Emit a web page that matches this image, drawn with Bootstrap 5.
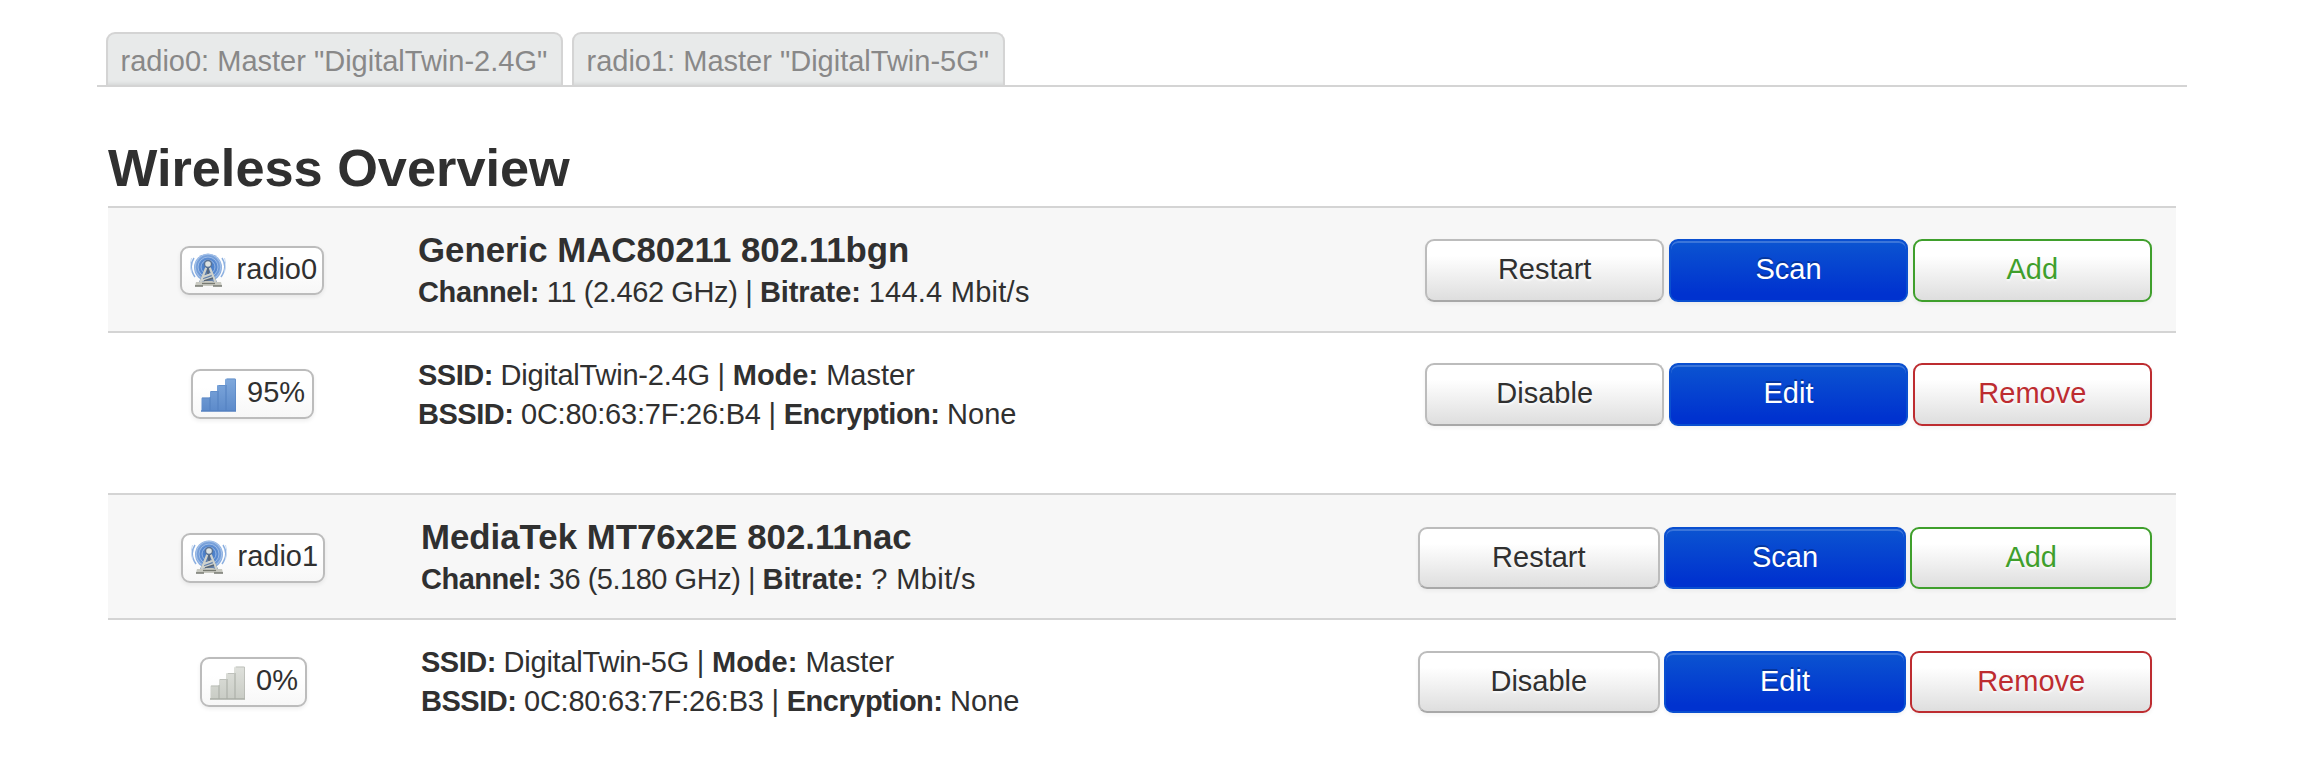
<!DOCTYPE html>
<html lang="en">
<head>
<meta charset="utf-8">
<meta name="viewport" content="width=device-width, initial-scale=1">
<title>Wireless Overview</title>
<link rel="stylesheet" href="https://cdn.jsdelivr.net/npm/bootstrap@5.3.0/dist/css/bootstrap.min.css">
<style>
body{font-family:"Liberation Sans",Arial,sans-serif;font-size:29px;line-height:39.5px;color:#303030;background:#fff;overflow:hidden}
.page{width:2090px;margin-left:97px;padding-top:32px}
.wifi-tabs{border-bottom:2px solid #d4d4d4;padding-left:9px;gap:9px}
.wifi-tabs .nav-link{height:53px;padding:9px 0 0 12.5px;border:2px solid #d4d4d4;border-bottom:0;border-radius:9px 9px 0 0;background:#e8eaea;box-shadow:inset 0 -4px 4px -3px rgba(0,0,0,.1);color:#888;line-height:36px;white-space:nowrap;margin:0}
.tab-a{width:457px}
.tab-b{width:433px}
.overview{margin:0 11px}
h2{font-size:52.3px;line-height:60px;font-weight:700;margin:50.6px 0 8.4px}
.device{border-top:2px solid #d4d4d4}
.device+.device{margin-top:35px}
.line{padding-top:22px;height:125px}
.line.head{background:#f7f7f7;border-bottom:2px solid #d4d4d4}
.state{width:288px;margin-right:1px}
.info{padding-left:21px;white-space:nowrap}
.second .state{width:290px}
.second .info{padding-left:22px}
.net .info{padding-top:1px}
h3{font-size:34.8px;line-height:40px;font-weight:700;margin:0 0 3px}
.chip{border:2px solid #bcbcbc;border-radius:9px;background:linear-gradient(#fff,#fff 35%,#f7f7f7);box-shadow:0 2px 4px rgba(0,0,0,.07);height:49px;padding-left:8px;line-height:43px;margin-top:16px;white-space:nowrap}
.chip svg{display:block;margin-top:5px;margin-right:10.5px;flex:none}
.net .chip{height:50px;margin-top:14px}
.net .chip svg{margin-top:7px}
.second .chip{height:50px}
.second .net .chip{margin-top:15px}
.w-radio{width:144px}
.w-sig{width:123px}
.w-zero{width:107px}
.actions{width:727px;gap:4.5px;margin-right:24px;margin-top:9px}
.net .actions{margin-top:8px}
.second .actions{width:734px;margin-top:10px}
.second .net .actions{margin-top:9px}
.actions .btn{flex:1 1 0;height:63px;padding:0 0 3px;font-size:29px;line-height:57px;border:2px solid #bcbcbc;border-bottom-color:#a8a8a8;border-radius:9px;color:#303030;background:linear-gradient(#fff,#fff 25%,#dedede);box-shadow:0 2px 4px rgba(0,0,0,.05);text-shadow:0 2px 2px rgba(255,255,255,.75)}
.second .actions .btn{height:62px;line-height:56px}
.actions .btn.go{color:#fff;border-color:#0a4fd0;background:linear-gradient(#0b54d1,#0032cf 90%);box-shadow:inset 0 2px 0 rgba(255,255,255,.2),0 2px 4px rgba(0,0,0,.05);text-shadow:0 -2px 0 rgba(0,0,0,.25)}
.actions .btn.plus{color:#3f9f2c;border-color:#3f9f2c}
.actions .btn.minus{color:#bd2c30;border-color:#bd2c30}
.t5{letter-spacing:-.48px}.t4{letter-spacing:-.38px}.t3{letter-spacing:-.22px}.t1{letter-spacing:-.1px}.p3{letter-spacing:.25px}.p5{letter-spacing:.4px}
</style>
</head>
<body>
<svg width="0" height="0" class="position-absolute" aria-hidden="true">
  <defs>
    <radialGradient id="glow"><stop offset="0" stop-color="#3f75c2"/><stop offset=".6" stop-color="#5688cf"/><stop offset="1" stop-color="#8fb2e2"/></radialGradient>
    <linearGradient id="blue" x2="0" y2="1"><stop offset="0" stop-color="#80a9dc"/><stop offset="1" stop-color="#5c8aca"/></linearGradient>
    <linearGradient id="grey" x2="0" y2="1"><stop offset="0" stop-color="#dfe1dc"/><stop offset="1" stop-color="#c9ccc5"/></linearGradient>
    <symbol id="radio" viewBox="0 0 36 36">
      <circle cx="18" cy="14.500" r="14" fill="url(#glow)"/>
      <g fill="none" stroke="#b9d0f0" stroke-width="1" opacity=".65"><circle cx="18" cy="14" r="7"/><circle cx="18" cy="14" r="10"/><circle cx="18" cy="14" r="12.800"/></g>
      <path d="M4 5q-6 9 1 19M32 5q6 9-1 19" fill="none" stroke="#8db0e0" stroke-width="1.500"/>
      <path d="M1.500 5q-3 7 0 14M34.500 5q3 7 0 14" fill="none" stroke="#cbdcf2" stroke-width="1"/>
      <path d="M16 13 9 29h18l-7-16z" fill="#54709a" opacity=".75"/>
      <path d="m16.500 14-6 15M19.500 14l6 15M13 24l8-3M11 28l12-4" stroke="#cfd2cd" stroke-width="2.200"/>
      <path d="m18 15 0 6M14 28l9-3" stroke="#596675" stroke-width="1.600"/>
      <circle cx="18" cy="11" r="3.500" fill="#dde2e1" stroke="#587296" stroke-width="1.400"/>
      <path d="M6 29h7l2-1h7l2 1h7l1 4H5z" fill="#c8c9c1"/>
      <path d="M5 33h8M23 33h9" stroke="#777a71" stroke-width="1.500"/><path d="M12 30.500h13" stroke="#777a71" stroke-width="1.300"/>
    </symbol>
    <symbol id="bars" viewBox="0 0 36 34">
      <path d="M.5 33V20.500q0-1 1-1H9V14q0-1 1-1h6V8q0-1 1-1h7V2q0-1.500 1.500-1.500h8Q35 .5 35 2v31z"/>
      <path d="M9 19v14M17 13v20M25 7v26" fill="none" stroke="currentColor" stroke-width="1.300" opacity=".8"/>
      <path d="M1 20h7M10 13.500h6M18 7.500h6M26 1h8.500v31" fill="none" stroke="currentColor" stroke-width="1" opacity=".55"/>
      <path d="M0 33h35" stroke="currentColor" stroke-width="1.500"/>
    </symbol>
  </defs>
</svg>
<main class="page">
  <ul class="nav wifi-tabs flex-nowrap">
    <li class="nav-item"><a class="nav-link tab-a" href="#">radio0: Master "DigitalTwin-2.4G"</a></li>
    <li class="nav-item"><a class="nav-link tab-b" href="#">radio1: Master "DigitalTwin-5G"</a></li>
  </ul>
  <div class="overview">
    <h2>Wireless Overview</h2>
    <section class="device">
      <div class="line head d-flex align-items-start">
        <div class="state d-flex justify-content-center"><div class="chip w-radio d-flex"><svg width="36" height="36"><use href="#radio"/></svg>radio0</div></div>
        <div class="info flex-grow-1"><h3>Generic MAC80211 802.11bgn</h3><div><b class="t4">Channel: </b><span class="t4">11 (2.462 GHz) | </span><b class="t1">Bitrate: </b><span class="p3">144.4 Mbit/s</span></div></div>
        <div class="actions d-flex"><button class="btn">Restart</button><button class="btn go">Scan</button><button class="btn plus">Add</button></div>
      </div>
      <div class="line net d-flex align-items-start">
        <div class="state d-flex justify-content-center"><div class="chip w-sig d-flex"><svg width="36" height="34" fill="url(#blue)" color="#5481c0"><use href="#bars"/></svg>95%</div></div>
        <div class="info flex-grow-1"><div><b class="t5">SSID: </b><span class="t3">DigitalTwin-2.4G | </span><b>Mode: </b><span>Master</span></div><div><b class="t5">BSSID: </b><span class="t3">0C:80:63:7F:26:B4 | </span><b class="t5">Encryption: </b><span>None</span></div></div>
        <div class="actions d-flex"><button class="btn">Disable</button><button class="btn go">Edit</button><button class="btn minus">Remove</button></div>
      </div>
    </section>
    <section class="device second">
      <div class="line head d-flex align-items-start">
        <div class="state d-flex justify-content-center"><div class="chip w-radio d-flex"><svg width="36" height="36"><use href="#radio"/></svg>radio1</div></div>
        <div class="info flex-grow-1"><h3>MediaTek MT76x2E 802.11nac</h3><div><b class="t5">Channel: </b><span class="t5">36 (5.180 GHz) | </span><b class="t1">Bitrate: </b><span class="p5">? Mbit/s</span></div></div>
        <div class="actions d-flex"><button class="btn">Restart</button><button class="btn go">Scan</button><button class="btn plus">Add</button></div>
      </div>
      <div class="line net d-flex align-items-start">
        <div class="state d-flex justify-content-center"><div class="chip w-zero d-flex"><svg width="36" height="34" fill="url(#grey)" color="#a9aca5"><use href="#bars"/></svg>0%</div></div>
        <div class="info flex-grow-1"><div><b class="t5">SSID: </b><span class="t3">DigitalTwin-5G | </span><b>Mode: </b><span>Master</span></div><div><b class="t5">BSSID: </b><span class="t3">0C:80:63:7F:26:B3 | </span><b class="t5">Encryption: </b><span>None</span></div></div>
        <div class="actions d-flex"><button class="btn">Disable</button><button class="btn go">Edit</button><button class="btn minus">Remove</button></div>
      </div>
    </section>
  </div>
</main>
<script src="https://cdn.jsdelivr.net/npm/bootstrap@5.3.0/dist/js/bootstrap.bundle.min.js"></script>
</body>
</html>
